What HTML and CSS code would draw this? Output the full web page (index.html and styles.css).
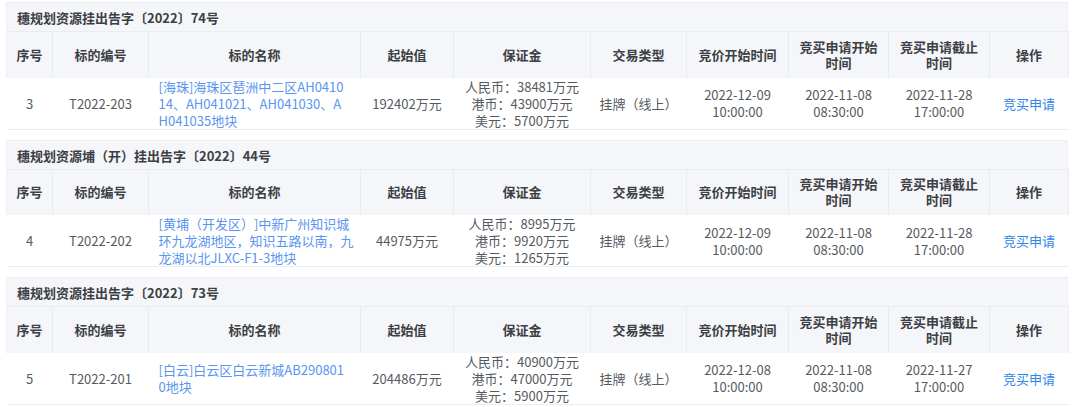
FILE: index.html
```html
<!DOCTYPE html>
<html lang="zh-CN">
<head>
<meta charset="utf-8">
<link rel="stylesheet" href="styles.css">
</head>
<body>
<div class="list">
  <section class="block">
    <div class="title">穗规划资源挂出告字〔2022〕74号</div>
    <table class="grid">
      <colgroup>
        <col class="c1"><col class="c2"><col class="c3"><col class="c4"><col class="c5"><col class="c6"><col class="c7"><col class="c8"><col class="c9"><col class="c10">
      </colgroup>
      <thead>
        <tr><th>序号</th><th>标的编号</th><th>标的名称</th><th>起始值</th><th>保证金</th><th>交易类型</th><th>竞价开始时间</th><th>竞买申请开始时间</th><th>竞买申请截止时间</th><th>操作</th></tr>
      </thead>
      <tbody>
        <tr>
          <td>3</td><td>T2022-203</td>
          <td class="name"><a>[海珠]海珠区琶洲中二区AH0410<br>14、AH041021、AH041030、A<br>H041035地块</a></td>
          <td>192402万元</td>
          <td>人民币<span class="p">：</span>38481万元<br>港币<span class="p">：</span>43900万元<br>美元<span class="p">：</span>5700万元</td>
          <td>挂牌（线上）</td>
          <td>2022-12-09<br>10:00:00</td>
          <td>2022-11-08<br>08:30:00</td>
          <td>2022-11-28<br>17:00:00</td>
          <td><a class="op">竞买申请</a></td>
        </tr>
      </tbody>
    </table>
  </section>
  <section class="block">
    <div class="title">穗规划资源埔（开）挂出告字〔2022〕44号</div>
    <table class="grid">
      <colgroup>
        <col class="c1"><col class="c2"><col class="c3"><col class="c4"><col class="c5"><col class="c6"><col class="c7"><col class="c8"><col class="c9"><col class="c10">
      </colgroup>
      <thead>
        <tr><th>序号</th><th>标的编号</th><th>标的名称</th><th>起始值</th><th>保证金</th><th>交易类型</th><th>竞价开始时间</th><th>竞买申请开始时间</th><th>竞买申请截止时间</th><th>操作</th></tr>
      </thead>
      <tbody>
        <tr>
          <td>4</td><td>T2022-202</td>
          <td class="name"><a>[黄埔（开发区）]中新广州知识城<br>环九龙湖地区，知识五路以南，九<br>龙湖以北JLXC-F1-3地块</a></td>
          <td>44975万元</td>
          <td>人民币<span class="p">：</span>8995万元<br>港币<span class="p">：</span>9920万元<br>美元<span class="p">：</span>1265万元</td>
          <td>挂牌（线上）</td>
          <td>2022-12-09<br>10:00:00</td>
          <td>2022-11-08<br>08:30:00</td>
          <td>2022-11-28<br>17:00:00</td>
          <td><a class="op">竞买申请</a></td>
        </tr>
      </tbody>
    </table>
  </section>
  <section class="block">
    <div class="title">穗规划资源挂出告字〔2022〕73号</div>
    <table class="grid">
      <colgroup>
        <col class="c1"><col class="c2"><col class="c3"><col class="c4"><col class="c5"><col class="c6"><col class="c7"><col class="c8"><col class="c9"><col class="c10">
      </colgroup>
      <thead>
        <tr><th>序号</th><th>标的编号</th><th>标的名称</th><th>起始值</th><th>保证金</th><th>交易类型</th><th>竞价开始时间</th><th>竞买申请开始时间</th><th>竞买申请截止时间</th><th>操作</th></tr>
      </thead>
      <tbody>
        <tr>
          <td>5</td><td>T2022-201</td>
          <td class="name"><a>[白云]白云区白云新城AB290801<br>0地块</a></td>
          <td>204486万元</td>
          <td>人民币<span class="p">：</span>40900万元<br>港币<span class="p">：</span>47000万元<br>美元<span class="p">：</span>5900万元</td>
          <td>挂牌（线上）</td>
          <td>2022-12-08<br>10:00:00</td>
          <td>2022-11-08<br>08:30:00</td>
          <td>2022-11-27<br>17:00:00</td>
          <td><a class="op">竞买申请</a></td>
        </tr>
      </tbody>
    </table>
  </section>
</div>
</body>
</html>
```

FILE: styles.css
```css
html, body {
  margin: 0;
  padding: 0;
  background: #ffffff;
}
body {
  font-family: "Noto Sans CJK SC", "Noto Sans", sans-serif;
  font-size: 13px;
  color: #555a61;
  text-spacing-trim: space-all;
}
.list {
  padding: 2px 12px 0 6px;
  display: flex;
  flex-direction: column;
  gap: 10px;
}
.block {
  display: flex;
  flex-direction: column;
}
.title {
  height: 29px;
  line-height: 29px;
  padding-left: 10px;
  background: #f4f6f9;
  border: 1px solid #eceef2;
  border-bottom: none;
  box-sizing: border-box;
  font-weight: 700;
  color: #3c3f44;
}
.grid {
  width: 100%;
  table-layout: fixed;
  border-collapse: collapse;
}
.c1 { width: 46px; }
.c2 { width: 96px; }
.c3 { width: 212px; }
.c4 { width: 93px; }
.c5 { width: 137px; }
.c6 { width: 96px; }
.c7 { width: 102px; }
.c8 { width: 100px; }
.c9 { width: 101px; }
.c10 { width: 79px; }
.grid th {
  height: 46px;
  box-sizing: border-box;
  padding: 6px 6px;
  line-height: 16px;
  background: #f4f6f9;
  border-top: 1px solid #e9ecf1;
  border-left: 1px solid #e8ebf0;
  border-right: 1px solid #e8ebf0;
  font-weight: 700;
  color: #3c3f44;
  text-align: center;
  vertical-align: middle;
}
.grid th:first-child { border-left-color: #eceef2; padding: 6px 4px; }
.grid td {
  height: 51px;
  box-sizing: border-box;
  padding: 0 4px;
  line-height: 17px;
  text-align: center;
  vertical-align: middle;
  background: #ffffff;
  border-bottom: 1px solid #ebedf1;
  white-space: nowrap;
}
.grid td.name {
  text-align: left;
  padding: 0 4px 0 10px;
}
.p {
  font-family: "Noto Sans CJK TC", "Noto Sans CJK SC", sans-serif;
}
.name a {
  color: #5a95f0;
}
.op {
  color: #2f86e8;
}
```
